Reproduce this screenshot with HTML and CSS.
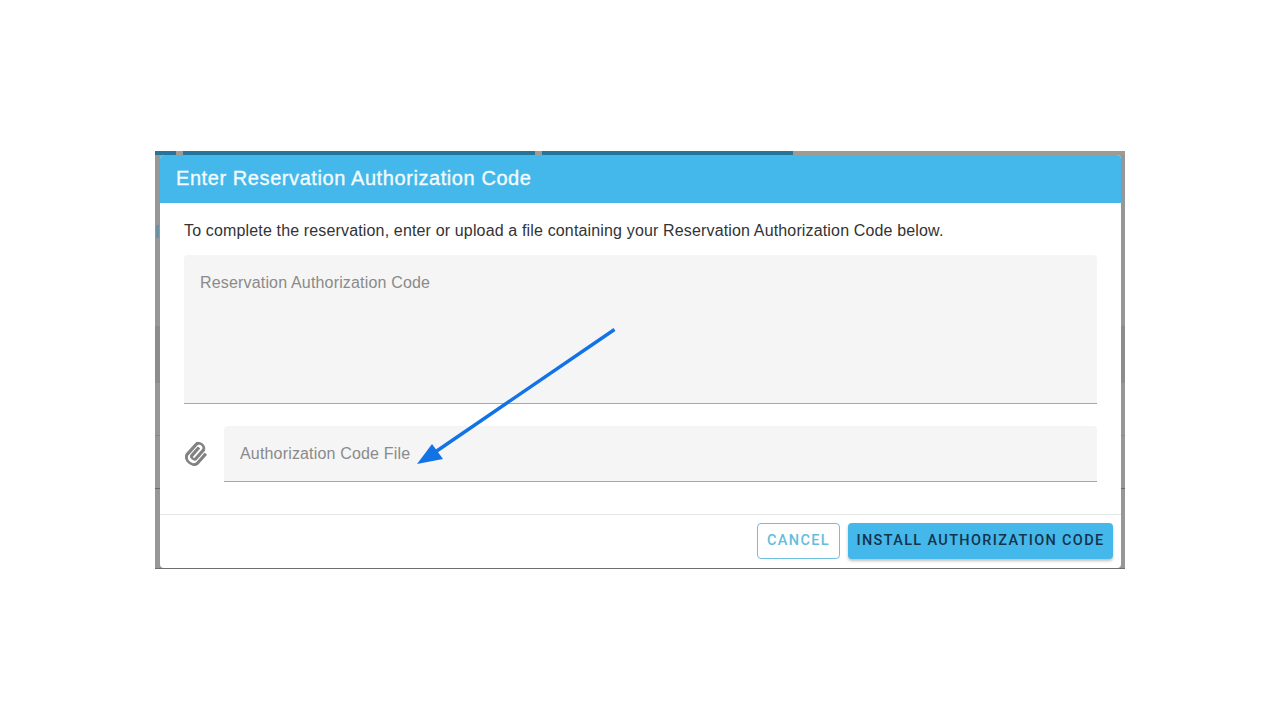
FILE: index.html
```html
<!DOCTYPE html>
<html lang="en">
<head>
<meta charset="utf-8">
<title>Enter Reservation Authorization Code</title>
<link rel="stylesheet" href="styles.css">
</head>
<body>
<div class="stage">
  <div class="backdrop-strip">
    <span class="seg seg-a"></span><span class="seg seg-gap1"></span><span class="seg seg-b"></span><span class="seg seg-gap2"></span><span class="seg seg-c"></span>
  </div>
  <span class="backdrop-mark"></span>
  <section class="dialog">
    <header class="dialog-title">Enter Reservation Authorization Code</header>
    <div class="dialog-body">
      <p class="intro">To complete the reservation, enter or upload a file containing your Reservation Authorization Code below.</p>
      <div class="field field-area"><span class="placeholder">Reservation Authorization Code</span></div>
      <div class="file-row">
        <svg class="clip" viewBox="0 0 24 24" aria-hidden="true"><path d="M16.5 6v11.5c0 2.21-1.79 4-4 4s-4-1.79-4-4V5c0-1.38 1.12-2.5 2.5-2.5s2.5 1.12 2.5 2.5v10.5c0 .55-.45 1-1 1s-1-.45-1-1V6H10v9.5c0 1.38 1.12 2.5 2.5 2.5s2.5-1.12 2.5-2.5V5c0-2.21-1.79-4-4-4S7 2.79 7 5v12.5c0 3.04 2.46 5.5 5.5 5.5s5.5-2.46 5.5-5.5V6h-1.5z" transform="rotate(42 12 12) translate(12 12) scale(1.22 .92) translate(-12.2 -12)"/></svg>
        <div class="field field-file"><span class="placeholder">Authorization Code File</span></div>
      </div>
    </div>
    <footer class="dialog-actions">
      <button class="btn btn-cancel" type="button">CANCEL</button>
      <button class="btn btn-install" type="button">INSTALL AUTHORIZATION CODE</button>
    </footer>
  </section>
  <svg class="arrow" viewBox="0 0 1280 720" width="1280" height="720" aria-hidden="true">
    <line x1="614.5" y1="329.5" x2="436" y2="451.5" stroke="#1273e6" stroke-width="3.4"/>
    <polygon points="417,464 432,444 443,459" fill="#1273e6"/>
  </svg>
</div>
</body>
</html>
```

FILE: styles.css
```css
* { box-sizing: border-box; }
html, body { margin: 0; padding: 0; height: 720px; overflow: hidden; background: #fff; }
body { font-family: "Liberation Sans", Arial, sans-serif; color: #2f2f2f; }

.stage {
  position: relative;
  width: 970px;
  height: 418px;
  margin: 151px 0 0 155px;
  padding: 4px 4px 1px 5px;
  background: linear-gradient(#979797 0, #979797 175px, #8c8c8c 175px, #8c8c8c 232px, #979797 232px, #979797 284px, #888 284px, #888 285px, #979797 285px, #979797 337px, #6a6a6a 337px, #6a6a6a 338px, #979797 338px, #979797 417px, #6e6e6e 417px);
}

.backdrop-strip { position: absolute; top: 0; left: 0; right: 0; height: 4px; display: flex; background: #9d9b92; }
.seg { display: block; height: 4px; }
.seg-a { width: 21px; background: #26749a; }
.seg-gap1 { width: 7px; }
.seg-b { width: 352px; background: #26749a; }
.seg-gap2 { width: 7px; }
.seg-c { width: 251px; background: #26749a; }
.backdrop-mark { position: absolute; left: 1px; top: 74px; width: 3px; height: 13px; background: #6f8fa3; }

.dialog {
  position: relative;
  height: 413px;
  display: flex;
  flex-direction: column;
  background: #fff;
  border-radius: 4px;
  overflow: hidden;
}
.dialog-title {
  height: 48px;
  flex: none;
  padding: 0 16px 2px;
  display: flex;
  align-items: center;
  background: #44b8ea;
  color: #f4fbfe;
  font-size: 20px;
  letter-spacing: 0.58px;
  -webkit-text-stroke: 0.35px #f4fbfe;
}
.dialog-body { flex: 1; padding: 18px 24px 0; }
.intro { margin: 0; font-size: 16px; line-height: 19px; letter-spacing: 0.152px; color: #333; }
.field { background: #f5f5f5; border-bottom: 1px solid #a8a8a8; border-radius: 4px 4px 0 0; }
.placeholder { font-size: 16px; line-height: 19px; letter-spacing: 0.17px; color: #8a8a8a; }
.field-area { height: 149px; margin-top: 15px; padding: 18px 16px 0; }
.file-row { display: flex; align-items: center; margin-top: 22px; }
.clip { flex: none; width: 28px; height: 28px; margin-left: -2px; margin-right: 14px; fill: #808080; stroke: #808080; stroke-width: 0.7px; }
.field-file { flex: 1; height: 56px; padding: 18px 16px 0; }

.dialog-actions {
  flex: none;
  height: 54px;
  padding: 8px 8px 0 0;
  display: flex;
  justify-content: flex-end;
  gap: 8px;
  border-top: 1px solid #e6e6e6;
}
.btn {
  height: 36px;
  padding: 0 0 2px;
  border-radius: 4px;
  font-family: Roboto, "Liberation Sans", sans-serif;
  font-size: 14.5px;
  font-weight: 500;
  letter-spacing: 1.35px;
}
.btn-cancel { width: 83px; background: #fff; border: 1px solid #6fc0dc; color: #63bedc; }
.btn-install { width: 265px; background: #44b8ea; border: 0; color: #16334a; box-shadow: 0 2px 3px rgba(0,0,0,.25); }

.arrow { position: absolute; left: -155px; top: -151px; pointer-events: none; }
```
